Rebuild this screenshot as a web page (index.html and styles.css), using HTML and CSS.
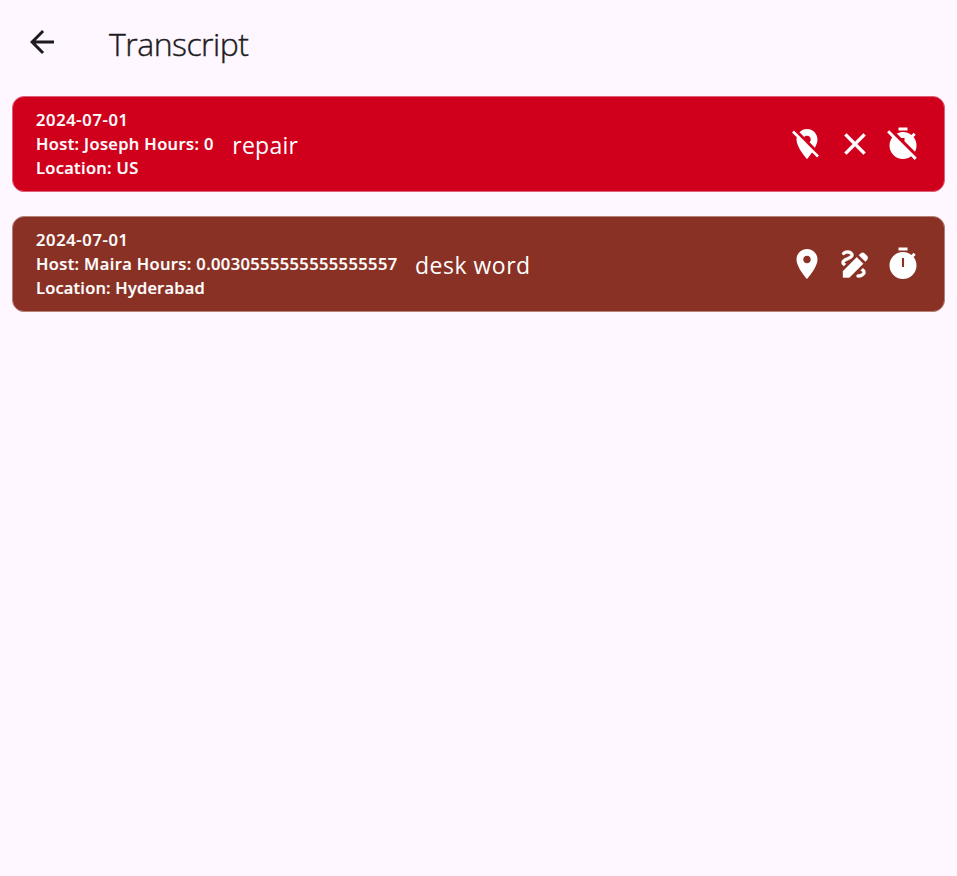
FILE: index.html
```html
<!DOCTYPE html>
<html lang="en">
<head>
<meta charset="utf-8">
<title>Transcript</title>
<link rel="stylesheet" href="styles.css">
</head>
<body>
<header class="bar">
  <svg class="icon back" viewBox="0 0 24 24"><path d="M20 11H7.83l5.59-5.59L12 4l-8 8 8 8 1.41-1.41L7.83 13H20v-2z"/></svg>
  <h1 class="title">Transcript</h1>
</header>
<main class="list">
  <article class="card rejected">
    <div class="details"><p><span class="date">2024-07-01</span></p><p><span class="host">Host: Joseph Hours: 0</span></p><p><span class="place-short">Location: US</span></p></div>
    <p class="task task-tight">repair</p>
    <div class="status">
      <svg class="icon" viewBox="0 0 24 24"><path d="M12 6.5c1.38 0 2.5 1.12 2.5 2.5 0 .74-.33 1.39-.83 1.85l3.63 3.63c.98-1.86 1.7-3.8 1.7-5.48 0-3.87-3.13-7-7-7-1.98 0-3.76.83-5.04 2.15l3.19 3.19c.46-.52 1.11-.84 1.85-.84zm4.37 9.6l-4.63-4.63-.11-.11L3.27 3 2 4.27l3.18 3.18C5.07 7.95 5 8.47 5 9c0 5.25 7 13 7 13s1.67-1.85 3.38-4.35L18.73 21 20 19.73l-3.63-3.63z"/></svg>
      <svg class="icon cross" viewBox="0 0 24 24"><path d="M19 6.41L17.59 5 12 10.59 6.41 5 5 6.41 10.59 12 5 17.59 6.41 19 12 13.41 17.59 19 19 17.59 13.41 12z"/></svg>
      <svg class="icon" viewBox="0 0 24 24"><path d="M9 1h6v2H9zM13 8v2.17l6.98 6.98C20.63 15.91 21 14.5 21 13c0-2.12-.74-4.07-1.97-5.61l1.42-1.42c-.43-.51-.9-.99-1.41-1.41l-1.42 1.42C16.07 4.74 14.12 4 12 4c-1.5 0-2.91.37-4.15 1.02L10.83 8H13zM2.81 2.81L1.39 4.22l3.4 3.4C3.67 9.12 3 10.98 3 13c0 4.97 4.02 9 9 9 2.02 0 3.88-.67 5.38-1.79l2.4 2.4 1.41-1.41z"/></svg>
    </div>
  </article>
  <article class="card verified">
    <div class="details"><p><span class="date">2024-07-01</span></p><p><span class="host">Host: Maira Hours: 0.0030555555555555557</span></p><p><span class="place">Location: Hyderabad</span></p></div>
    <p class="task">desk word</p>
    <div class="status">
      <svg class="icon" viewBox="0 0 24 24"><path d="M12 2C8.13 2 5 5.13 5 9c0 5.25 7 13 7 13s7-7.75 7-13c0-3.87-3.13-7-7-7zm0 9.5c-1.38 0-2.5-1.12-2.5-2.5s1.12-2.5 2.5-2.5 2.5 1.12 2.5 2.5-1.12 2.5-2.5 2.5z"/></svg>
      <svg class="icon draw" viewBox="0 0 24 24"><path d="M18.85 10.39l1.06-1.06c.78-.78.78-2.05 0-2.83L18.5 5.09c-.78-.78-2.05-.78-2.83 0l-1.06 1.06 4.24 4.24zM13.19 7.56L4 16.76V21h4.24l9.19-9.19-4.24-4.25zM19 17.5c0 2.19-2.54 3.5-5 3.5-.55 0-1-.45-1-1s.45-1 1-1c1.54 0 3-.73 3-1.5 0-.47-.48-.87-1.23-1.2l1.48-1.48c1.07.63 1.75 1.47 1.75 2.68zM4.58 13.35C3.61 12.79 3 12.06 3 11c0-1.8 1.89-2.63 3.56-3.36C7.59 7.18 9 6.56 9 6c0-.41-.78-1-2-1-1.26 0-1.8.61-1.83.64-.35.41-.98.46-1.4.12-.41-.34-.49-.95-.15-1.38C3.73 4.24 4.76 3 7 3s4 1.32 4 3c0 1.87-1.93 2.72-3.64 3.47C6.42 9.88 5 10.5 5 11c0 .31.43.6 1.07.86l-1.49 1.49z"/></svg>
      <svg class="icon" viewBox="0 0 24 24"><path d="M9 1h6v2H9zM19.03 7.39l1.42-1.42c-.43-.51-.9-.99-1.41-1.41l-1.42 1.42C16.07 4.74 14.12 4 12 4c-4.97 0-9 4.03-9 9s4.02 9 9 9 9-4.03 9-9c0-2.12-.74-4.07-1.97-5.61zM12.7 14h-1.4V8h1.4v6z"/></svg>
    </div>
  </article>
</main>
</body>
</html>
```
FILE: styles.css
```css
* { box-sizing: border-box; margin: 0; }
body { background: #fef7ff; font-family: "Segoe UI", "Open Sans", "Noto Sans", sans-serif; color: #1d1b20; }
.icon { display: block; width: 36px; height: 36px; fill: currentColor; }
.cross { stroke: currentColor; stroke-width: 0.4; }
.draw { stroke: currentColor; stroke-width: 0.25; }
.bar { display: flex; align-items: center; height: 84px; padding-left: 24px; }
.title { margin-left: 49px; font-size: 32px; font-weight: 300; line-height: 42px; letter-spacing: -0.52px; padding-top: 3px; white-space: nowrap; -webkit-text-stroke: 0.4px currentColor; }
.list { display: grid; gap: 24px; padding: 12px; }
.card { display: flex; align-items: center; height: 96px; padding: 0 23px; border-radius: 12px; color: #fff; border: 1px solid; white-space: nowrap; }
.rejected { background: #d0001d; border-color: #e0607a; }
.verified { background: #893125; border-color: #b58078; }
.details { font-size: 16.5px; font-weight: 600; line-height: 24px; -webkit-text-stroke: 0.2px currentColor; }
.date { letter-spacing: 0.65px; }
.host { letter-spacing: 0.38px; }
.place { letter-spacing: 0.2px; }
.place-short { letter-spacing: 0.33px; }
.task { margin-left: 17.5px; font-size: 23px; line-height: 36px; padding-top: 2px; letter-spacing: 0.5px; }
.task-tight { letter-spacing: 0.25px; margin-left: 18.5px; }
.status { display: flex; gap: 12px; margin-left: auto; }
```
